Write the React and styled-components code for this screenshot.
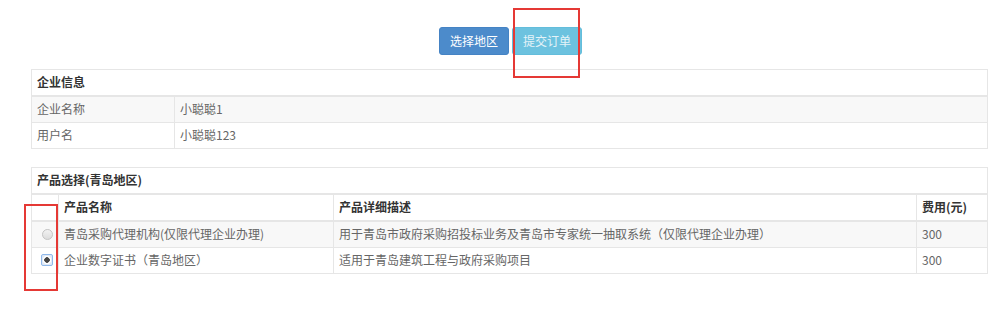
import React from "react";
import styled, { createGlobalStyle } from "styled-components";

const Global = createGlobalStyle`
  html, body { margin: 0; padding: 0; background: #fff; }
  body { font-family: "Noto Sans CJK SC", "Liberation Sans", sans-serif; font-size: 12px; color: #555; }
`;

const Page = styled.div`
  position: relative;
  width: 1005px;
  height: 318px;
  padding: 27px 17px 0 31px;
  box-sizing: border-box;
`;

const Toolbar = styled.div`
  display: flex;
  justify-content: center;
  gap: 3px;
  margin-bottom: 14px;
  padding-left: 2px;
`;

const Button = styled.button`
  height: 28px;
  padding: 0 10px;
  border: 1px solid ${(p) => (p.$variant === "info" ? "#63bddb" : "#4583c4")};
  border-radius: 3px;
  background: ${(p) => (p.$variant === "info" ? "#6cc2df" : "#4c8bcb")};
  color: ${(p) => (p.$variant === "info" ? "#e4f3f8" : "#fff")};
  font-family: "Noto Sans CJK SC", sans-serif;
  font-size: 12px;
  line-height: 26px;
  cursor: pointer;
`;

const Table = styled.table`
  width: 957px;
  border-collapse: collapse;
  table-layout: fixed;
  margin-bottom: ${(p) => p.$mb || 0}px;
  border: 1px solid #e6e6e6;
`;

const Cell = styled.td`
  border: 1px solid #e6e6e6;
  border-bottom-width: ${(p) => (p.$thick ? 2 : 1)}px;
  padding: 4px 5px 5px;
  line-height: 16px;
  height: 16px;
  text-align: left;
  color: ${(p) => (p.$bold ? "#333" : "#666")};
  font-weight: ${(p) => (p.$bold ? 700 : 400)};
  white-space: nowrap;
  vertical-align: middle;
`;

const Row = styled.tr`
  background: ${(p) => (p.$striped ? "#f8f8f8" : "#fff")};
`;

const Radio = styled.span`
  display: block;
  box-sizing: border-box;
  width: ${(p) => (p.$checked ? 12 : 11)}px;
  height: ${(p) => (p.$checked ? 12 : 11)}px;
  margin-left: ${(p) => (p.$checked ? 4 : 5)}px;
  border-radius: ${(p) => (p.$checked ? "2px" : "50%")};
  border: 1px solid ${(p) => (p.$checked ? "#8fb8ea" : "#c4c4c4")};
  background: ${(p) =>
    p.$checked
      ? "radial-gradient(circle, #444 0 2.5px, #fff 3px 4px, #dfe9f6 4.5px)"
      : "linear-gradient(#f2f2f2, #dcdcdc)"};
`;

const Highlight = styled.div`
  position: absolute;
  border: 2px solid #e53935;
  box-sizing: border-box;
  pointer-events: none;
`;

export default function App() {
  const products = [
    { name: "青岛采购代理机构(仅限代理企业办理)", desc: "用于青岛市政府采购招投标业务及青岛市专家统一抽取系统（仅限代理企业办理）", fee: "300", checked: false },
    { name: "企业数字证书（青岛地区）", desc: "适用于青岛建筑工程与政府采购项目", fee: "300", checked: true },
  ];
  return (
    <Page>
      <Global />
      <Toolbar>
        <Button>选择地区</Button>
        <Button $variant="info">提交订单</Button>
      </Toolbar>

      <Table $mb={18}>
        <colgroup>
          <col style={{ width: 143 }} />
          <col />
        </colgroup>
        <tbody>
          <Row>
            <Cell colSpan={2} $bold $thick>企业信息</Cell>
          </Row>
          <Row $striped>
            <Cell>企业名称</Cell>
            <Cell>小聪聪1</Cell>
          </Row>
          <Row>
            <Cell>用户名</Cell>
            <Cell>小聪聪123</Cell>
          </Row>
        </tbody>
      </Table>

      <Table>
        <colgroup>
          <col style={{ width: 27 }} />
          <col style={{ width: 275 }} />
          <col style={{ width: 583 }} />
          <col />
        </colgroup>
        <tbody>
          <Row>
            <Cell colSpan={4} $bold $thick>产品选择(青岛地区)</Cell>
          </Row>
          <Row>
            <Cell $thick />
            <Cell $bold $thick>产品名称</Cell>
            <Cell $bold $thick>产品详细描述</Cell>
            <Cell $bold $thick>费用(元)</Cell>
          </Row>
          {products.map((p, i) => (
            <Row key={p.name} $striped={i % 2 === 0}>
              <Cell><Radio $checked={p.checked} /></Cell>
              <Cell>{p.name}</Cell>
              <Cell>{p.desc}</Cell>
              <Cell>{p.fee}</Cell>
            </Row>
          ))}
        </tbody>
      </Table>

      <Highlight style={{ left: 513, top: 8, width: 67, height: 70 }} />
      <Highlight style={{ left: 24, top: 204, width: 34, height: 87 }} />
    </Page>
  );
}
